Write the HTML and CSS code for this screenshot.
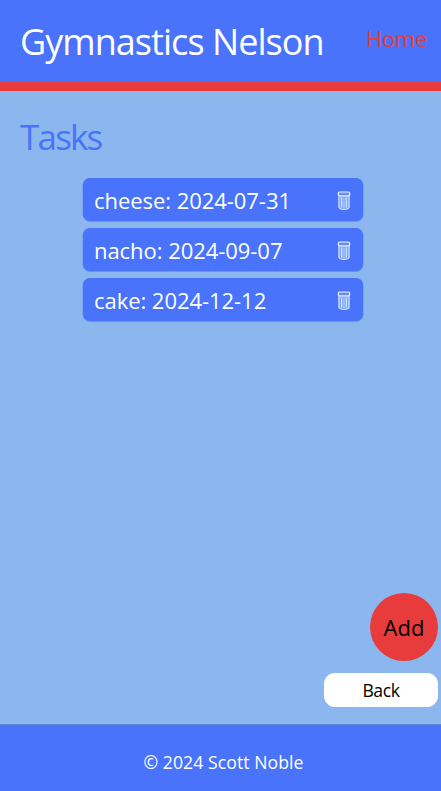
FILE: index.html
```html
<!DOCTYPE html>
<html lang="en">
<head>
<meta charset="utf-8">
<title>Tasks</title>
<link rel="stylesheet" href="styles.css">
</head>
<body>
<svg class="symbols" aria-hidden="true">
  <symbol id="trash" viewBox="0 0 14 20">
    <path d="M1.9 5.5V17.4Q2.5 19.4 7 19.4T12.1 17.4V5.5Z" fill="#7fa6fb"/>
    <path d="M1.9 5.5V17.4Q2.5 19.4 7 19.4T12.1 17.4V5.5M4.6 7.5V17.5M9.3 7.5V17.5" fill="none" stroke="#d2e2ff" stroke-width="1.2"/>
    <path d="M7 7.5V18" stroke="#b9c6ff" stroke-width="1.2"/>
    <path d="M8.2 7.5V18" stroke="#63cdfa" stroke-width="1"/>
    <rect x="1.3" y="2" width="11.4" height="3.8" rx="1.4" fill="#668cff" stroke="#edf3ff" stroke-width="1.2"/>
  </symbol>
</svg>
<header class="header">
  <h1 class="brand">Gymnastics Nelson</h1>
  <a class="home">Home</a>
</header>
<main class="main">
  <h2 class="title">Tasks</h2>
  <ul class="tasks">
    <li class="task"><span>cheese: 2024-07-31</span><svg class="icon"><use href="#trash"/></svg></li>
    <li class="task"><span>nacho: 2024-09-07</span><svg class="icon"><use href="#trash"/></svg></li>
    <li class="task"><span>cake: 2024-12-12</span><svg class="icon"><use href="#trash"/></svg></li>
  </ul>
  <div class="actions">
    <button class="add">Add</button>
    <button class="back">Back</button>
  </div>
</main>
<footer class="footer">© 2024 Scott Noble</footer>
</body>
</html>
```
FILE: styles.css
```css
* { box-sizing: border-box; }
body {
  margin: 0;
  height: 791px;
  display: flex;
  flex-direction: column;
  background: #8bb7ee;
  color: #fff;
  font-family: "Open Sans", "Noto Sans", sans-serif;
  overflow: hidden;
}
.symbols { display: none; }
.header {
  height: 91px;
  padding: 0 14px 0 20px;
  display: flex;
  justify-content: space-between;
  background: #4973fb;
  border-bottom: 9px solid #e83c3c;
}
.brand, .title { margin: 0; font-weight: 400; font-size: 36px; line-height: 48px; white-space: nowrap; }
.brand { padding-top: 18px; letter-spacing: -0.95px; }
.home { padding-top: 22px; font-size: 22px; line-height: 32px; letter-spacing: -0.3px; color: #e83c3c; }
.main { flex: 1; display: flex; flex-direction: column; }
.title { padding: 22px 0 0 20px; font-size: 35px; letter-spacing: -1.8px; color: #4973fb; }
.tasks { list-style: none; margin: 17.4px 0 0 83px; padding: 0; width: 280px; display: grid; gap: 7px; }
.task {
  height: 43px;
  padding: 0 12px 0 11px;
  display: flex;
  align-items: center;
  justify-content: space-between;
  border-radius: 7px;
  background: #4973fb;
  font-size: 22px;
  line-height: 32px;
  letter-spacing: -0.05px;
  box-shadow: 0 .5px 0 .5px #6b92f8;
}
.icon { width: 14px; height: 20px; }
.actions { margin: auto 3px 17px 0; display: flex; flex-direction: column; align-items: flex-end; gap: 12px; }
button { border: 0; padding: 0; font-family: inherit; color: #000; }
.add { width: 68px; height: 68px; border-radius: 50%; background: #e83c3c; font-size: 22px; }
.back { width: 114px; height: 34px; border-radius: 11px; background: #fff; font-size: 17.6px; letter-spacing: -0.4px; }
.footer {
  height: 67px;
  padding: 25px 0 0 6px;
  border-top: 1px solid #5f87cf;
  background: #4973fb;
  text-align: center;
  font-size: 17.6px;
  line-height: 24px;
  letter-spacing: 0.08px;
}
```
